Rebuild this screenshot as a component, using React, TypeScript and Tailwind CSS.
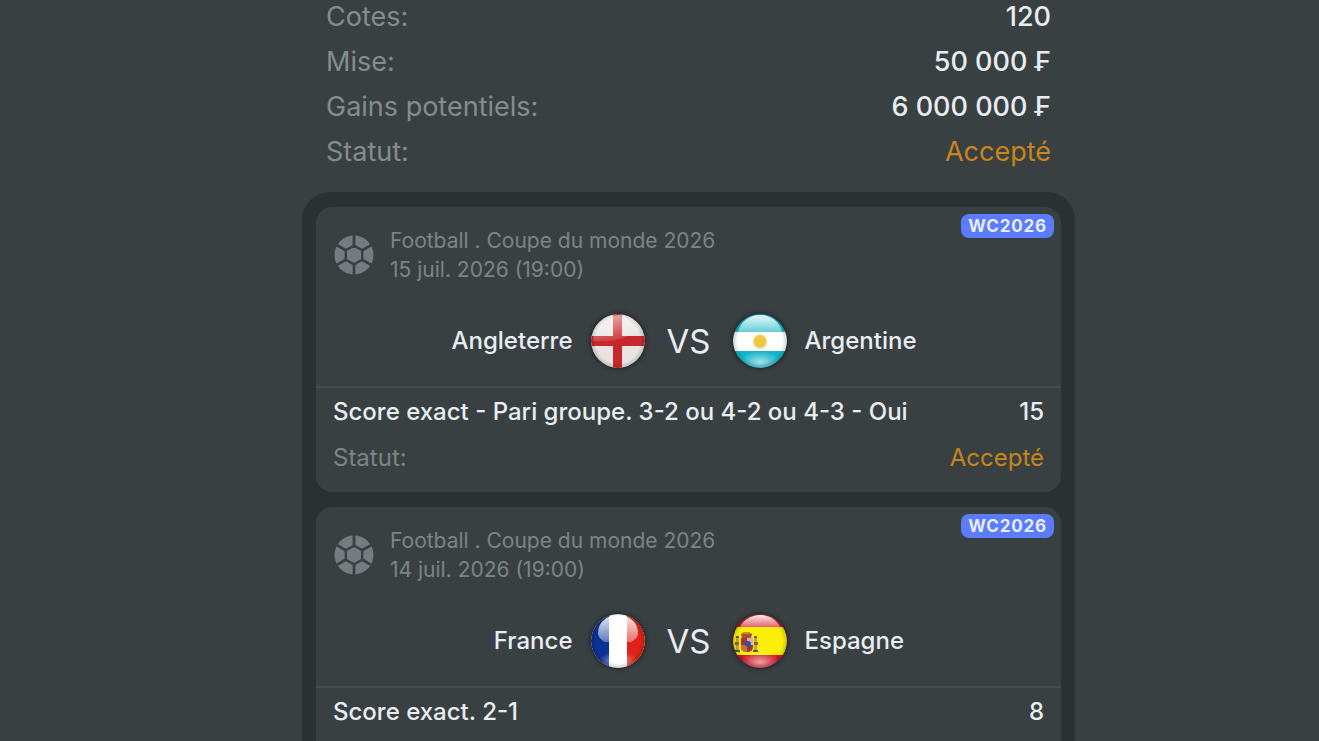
import type { ReactNode } from "react";

type Country = "england" | "argentina" | "france" | "spain";

const summary = [
  { label: "Cotes:", value: "120" },
  { label: "Mise:", value: "50 000 ₣" },
  { label: "Gains potentiels:", value: "6 000 000 ₣" },
];

const bets: {
  date: string;
  home: { name: string; flag: Country };
  away: { name: string; flag: Country };
  market: string;
  odds: string;
  status?: string;
}[] = [
  {
    date: "15 juil. 2026 (19:00)",
    home: { name: "Angleterre", flag: "england" },
    away: { name: "Argentine", flag: "argentina" },
    market: "Score exact - Pari groupe. 3-2 ou 4-2 ou 4-3 - Oui",
    odds: "15",
    status: "Accepté",
  },
  {
    date: "14 juil. 2026 (19:00)",
    home: { name: "France", flag: "france" },
    away: { name: "Espagne", flag: "spain" },
    market: "Score exact. 2-1",
    odds: "8",
  },
];

const flagArt: Record<Country, ReactNode> = {
  england: (
    <>
      <rect width="54" height="54" fill="#e9e4e2" />
      <rect x="22" width="9" height="54" fill="#c8282b" />
      <rect y="22" width="54" height="10" fill="#c8282b" />
    </>
  ),
  argentina: (
    <>
      <rect width="54" height="54" fill="#12b5c9" />
      <rect y="18" width="54" height="19" fill="#ffffff" />
      <circle cx="27" cy="27.5" r="7.5" fill="#f6e3a0" />
      <circle cx="27" cy="27.5" r="6" fill="#edc743" />
    </>
  ),
  france: (
    <>
      <rect width="54" height="54" fill="#ffffff" />
      <rect width="18" height="54" fill="#0c3297" />
      <rect x="36" width="18" height="54" fill="#e02216" />
    </>
  ),
  spain: (
    <>
      <rect width="54" height="54" fill="#cf1526" />
      <rect y="13" width="54" height="28" fill="#fbee08" />
      <path d="M3 24h3v12H3zM21 24h3v12h-3z" fill="#c9a04a" />
      <path d="M2 28h4v3H2zM21 28h4v3h-4zM3 22h3v2H3zM21 22h3v2h-3z" fill="#9a5a31" />
      <path d="M2 36h5v2H2zM20 36h5v2h-5zM3 23h2v1H3zM22 23h2v1h-2z" fill="#4c5a4b" />
      <path d="M8 20q5-4 11 0l-1 4H9z" fill="#a8512d" />
      <path d="M10 18h7v2h-7z" fill="#c98f2c" />
      <path d="M8 24h12v9q0 5-6 5t-6-5z" fill="#a8323b" />
      <path d="M14 24h6v7h-6z" fill="#c9b4c4" />
      <path d="M8 31h6v7q-6 0-6-5z" fill="#c07a2c" />
      <circle cx="15" cy="30" r="3" fill="#3a4f9b" />
    </>
  ),
};

function Flag({ country }: { country: Country }) {
  return (
    <svg viewBox="0 0 54 54" className="size-[54px] rounded-full shadow-[0_0_4px_1px_rgba(20,24,26,0.7)]" aria-hidden="true">
      <defs>
        <clipPath id={`${country}-clip`}>
          <circle cx="27" cy="27" r="27" />
        </clipPath>
        <radialGradient id={`${country}-rim`}>
          <stop offset="0.82" stopColor="#000" stopOpacity="0" />
          <stop offset="1" stopColor="#000" stopOpacity="0.18" />
        </radialGradient>
        <linearGradient id={`${country}-gloss`} x1="0" y1="0" x2="0" y2="1">
          <stop offset="0" stopColor="#fff" stopOpacity="0.9" />
          <stop offset="1" stopColor="#fff" stopOpacity="0.35" />
        </linearGradient>
        <linearGradient id={`${country}-fade`} x1="0" y1="0" x2="0.3" y2="1">
          <stop offset="0" stopColor="#fff" stopOpacity="0.65" />
          <stop offset="1" stopColor="#fff" stopOpacity="0.1" />
        </linearGradient>
        <radialGradient id={`${country}-glow`}>
          <stop offset="0" stopColor="#fff" stopOpacity="0.6" />
          <stop offset="1" stopColor="#fff" stopOpacity="0" />
        </radialGradient>
      </defs>
      <g clipPath={`url(#${country}-clip)`}>
        {flagArt[country]}
        {country !== "england" && <ellipse cx="27" cy="48" rx="20" ry="11" fill={`url(#${country}-glow)`} />}
        <circle cx="27" cy="27" r="27" fill={`url(#${country}-rim)`} />
        {country === "england" && (
          <path d="M2 27C2 12 13 1 27 1c11 0 20 6 24 15C40 20 30 29 2 27z" fill="url(#england-fade)" />
        )}
        {country === "france" && (
          <path d="M7 19C7 8 16 1 27 1s20 7 20 18c0 4-3 7-7 9H14c-4-2-7-5-7-9z" fill="url(#france-gloss)" />
        )}
        {country === "argentina" && <path d="M5 18C7 8 16 1 27 1s20 7 22 17z" fill="url(#argentina-gloss)" />}
        {country === "spain" && <path d="M7 13C10 6 18 1 27 1s17 5 20 12z" fill="url(#spain-gloss)" />}
      </g>
    </svg>
  );
}

function BallIcon() {
  return (
    <svg viewBox="0 0 40 40" className="size-10 shrink-0" aria-hidden="true">
      <circle cx="20" cy="20" r="19.5" fill="#757c7f" />
      <path
        d="M20 10.5V0M20 29.5V40M28.2 15.2L38 9.6M28.2 24.8L38 30.4M11.8 15.2L2 9.6M11.8 24.8L2 30.4"
        stroke="#394042"
        strokeWidth="2.8"
      />
      <path d="M20 10.6l8.2 4.7v9.4L20 29.4l-8.2-4.7v-9.4z" fill="#757c7f" stroke="#394042" strokeWidth="2.4" />
    </svg>
  );
}

function Team({ name, flag, away }: { name: string; flag: Country; away?: boolean }) {
  return (
    <div className={away ? "flex flex-row-reverse items-center justify-end gap-[18px]" : "flex items-center justify-end gap-[18px]"}>
      <span className="text-2xl font-medium">{name}</span>
      <Flag country={flag} />
    </div>
  );
}

export default function App() {
  return (
    <div className="grid h-screen grid-cols-[302fr_minmax(0,773px)_244fr] overflow-hidden bg-[#394042] font-[Inter,'Liberation_Sans',sans-serif] text-[#e9edf3]">
      <main className="col-start-2">
        <dl className="flex flex-col gap-[11px] px-6 text-[27px] leading-[34px]">
          {summary.map((row) => (
            <div key={row.label} className="flex justify-between">
              <dt className="text-[#858c8f]">{row.label}</dt>
              <dd className="font-medium">{row.value}</dd>
            </div>
          ))}
          <div className="flex justify-between">
            <dt className="text-[#858c8f]">Statut:</dt>
            <dd className="text-[#c9841c]">Accepté</dd>
          </div>
        </dl>

        <section className="mt-[23px] flex flex-col gap-[15px] rounded-t-[28px] bg-[#2a3133] px-[14px] pt-[15px] pb-[15px]">
          {bets.map((bet) => (
            <article key={bet.date} className="relative rounded-2xl bg-[#394042]">
              <span className="absolute top-[7px] right-[7px] rounded-lg bg-[#5b7cfd] px-[7px] text-[17px] leading-6 font-bold tracking-wider">
                WC2026
              </span>
              <header className="flex items-center gap-4 px-[18px] pt-[19px] text-[21px] leading-[29px] text-[#7d8487]">
                <BallIcon />
                <div>
                  <p>Football . Coupe du monde 2026</p>
                  <p>{bet.date}</p>
                </div>
              </header>

              <div className="grid grid-cols-[1fr_88px_1fr] items-center border-b-2 border-[#454c4f] pt-[30px] pb-[18px]">
                <Team {...bet.home} />
                <span className="text-center text-[33px] leading-10">VS</span>
                <Team {...bet.away} away />
              </div>

              <div className="min-h-[104px] px-[17px] pt-[7px] pb-[18px] text-2xl leading-[33px]">
                <div className="flex justify-between">
                  <p className="font-medium">{bet.market}</p>
                  <p className="font-medium">{bet.odds}</p>
                </div>
                {bet.status && (
                  <div className="mt-[13px] flex justify-between">
                    <p className="text-[#7d8487]">Statut:</p>
                    <p className="text-[#c9841c]">{bet.status}</p>
                  </div>
                )}
              </div>
            </article>
          ))}
        </section>
      </main>
    </div>
  );
}
